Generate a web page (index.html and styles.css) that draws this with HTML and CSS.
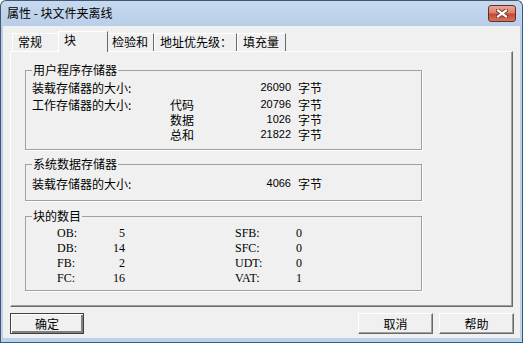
FILE: index.html
```html
<!DOCTYPE html>
<html lang="zh-CN">
<head>
  <meta charset="UTF-8">
  <title>属性 - 块文件夹离线</title>
  <link rel="stylesheet" href="styles.css">
</head>
<body>
  <div class="window">
    <div class="titlebar">
      <span class="title">属性 - 块文件夹离线</span>
      <button class="close" title="关闭">
        <svg width="12" height="9" viewBox="0 0 12 9">
          <path d="M2 1.5 L10 7.5 M10 1.5 L2 7.5" stroke="#6a2a20" stroke-width="4" stroke-linecap="square"/>
          <path d="M2 1.5 L10 7.5 M10 1.5 L2 7.5" stroke="#fff" stroke-width="2.2" stroke-linecap="square"/>
        </svg>
      </button>
    </div>

    <div class="client">
      <div class="tabs">
        <div class="tab tab-general">常规</div>
        <div class="tab tab-block active">块</div>
        <div class="tab tab-checksum">检验和</div>
        <div class="tab tab-priority">地址优先级：</div>
        <div class="tab tab-fill">填充量</div>
      </div>

      <div class="page">
        <fieldset class="group group-user">
          <legend>用户程序存储器</legend>
          <div class="mem-grid">
            <span>装载存储器的大小:</span><span></span><span class="num">26090</span><span class="unit">字节</span>
            <span>工作存储器的大小:</span><span>代码</span><span class="num">20796</span><span class="unit">字节</span>
            <span></span><span>数据</span><span class="num">1026</span><span class="unit">字节</span>
            <span></span><span>总和</span><span class="num">21822</span><span class="unit">字节</span>
          </div>
        </fieldset>

        <fieldset class="group group-sys">
          <legend>系统数据存储器</legend>
          <div class="mem-grid single">
            <span>装载存储器的大小:</span><span></span><span class="num">4066</span><span class="unit">字节</span>
          </div>
        </fieldset>

        <fieldset class="group group-blocks">
          <legend>块的数目</legend>
          <div class="blk-grid">
            <span>OB:</span><span class="val">5</span><span class="lbl2">SFB:</span><span class="val">0</span>
            <span>DB:</span><span class="val">14</span><span class="lbl2">SFC:</span><span class="val">0</span>
            <span>FB:</span><span class="val">2</span><span class="lbl2">UDT:</span><span class="val">0</span>
            <span>FC:</span><span class="val">16</span><span class="lbl2">VAT:</span><span class="val">1</span>
          </div>
        </fieldset>
      </div>

      <div class="buttons">
        <button class="btn btn-ok">确定</button>
        <button class="btn btn-cancel">取消</button>
        <button class="btn btn-help">帮助</button>
      </div>
    </div>
  </div>
</body>
</html>
```

FILE: styles.css
```css
/* dialog window */
body {
  margin: 0;
  background: #fff;
}
.window {
  width: 523px;
  height: 343px;
  box-sizing: border-box;
  border: 1px solid #3f5876;
  border-bottom-color: #2f5f8f;
  border-radius: 6px 6px 0 0;
  background: linear-gradient(to bottom, #c6d9ee 0, #b9cfe8 25px, #bcd2ea 100%);
  display: flex;
  flex-direction: column;
  font-family: "Noto Sans CJK SC", sans-serif;
  font-size: 12px;
  color: #000;
}
.titlebar {
  height: 25px;
  box-sizing: border-box;
  display: flex;
  justify-content: space-between;
  align-items: flex-start;
  padding: 0 6px;
}
.title {
  line-height: 24px;
}
.close {
  margin-top: 4px;
  width: 28px;
  height: 17px;
  padding: 0;
  border: 1px solid #6d2b22;
  border-radius: 3px;
  background: linear-gradient(to bottom, #e9a898 0, #d9806c 45%, #c54a33 55%, #d27460 100%);
  display: flex;
  align-items: center;
  justify-content: center;
}

/* client area */
.client {
  flex: 1;
  margin: 0 2px 4px;
  background: #f0f0f0;
  display: flex;
  flex-direction: column;
}
.tabs {
  height: 25px;
  display: flex;
  align-items: flex-end;
  padding-left: 9px;
}
.tab {
  height: 18px;
  box-sizing: border-box;
  border: 1px solid;
  border-color: #fff #696969 transparent #fff;
  border-bottom: none;
  padding-left: 5px;
  line-height: 16px;
  background: #f0f0f0;
  white-space: nowrap;
}
.tab.active {
  height: 21px;
  margin: 0 -2px -1px;
  position: relative;
  z-index: 1;
  line-height: 15px;
}
.tab-general { width: 48px; }
.tab-block { width: 50px; }
.tab-checksum { width: 48px; }
.tab-priority { width: 83px; }
.tab-fill { width: 49px; }

.page {
  height: 256px;
  box-sizing: border-box;
  margin: 0 7px;
  border: 1px solid;
  border-color: #fff #696969 #696969 #fff;
  box-shadow: inset -1px -1px #a0a0a0;
  padding: 11px 0 0 14px;
}

/* group boxes */
.group {
  width: 397px;
  min-width: 0;
  box-sizing: border-box;
  margin: 0;
  border: 1px solid #a0a0a0;
  box-shadow: 1px 1px 0 #fff;
}
.group legend {
  padding: 0 1px;
  line-height: 14px;
}
.group-user {
  padding: 3px 6px 7px;
  margin-bottom: 7px;
}
.group-sys {
  padding: 5px 6px 9px;
  margin-bottom: 8px;
}
.group-blocks {
  padding: 3px 6px 4px;
}
.mem-grid {
  display: grid;
  grid-template-columns: 138px 68px 53px auto;
  grid-template-rows: 17px repeat(3, 15px);
  line-height: 15px;
}
.mem-grid.single {
  grid-template-rows: 15px;
}
.num {
  text-align: right;
  font-family: "Liberation Sans", sans-serif;
  font-size: 11px;
}
.unit {
  padding-left: 7px;
}
.blk-grid {
  display: grid;
  grid-template-columns: 40px 28px 150px 27px;
  grid-auto-rows: 15px;
  padding-left: 25px;
  line-height: 15px;
  font-family: "Liberation Serif", serif;
  font-size: 12px;
}
.val {
  text-align: right;
}
.lbl2 {
  padding-left: 110px;
}

/* buttons */
.buttons {
  display: flex;
  height: 21px;
  margin-top: 6px;
  padding: 0 6px 0 7px;
}
.btn {
  width: 75px;
  height: 21px;
  padding: 0;
  font-family: "Noto Sans CJK SC", sans-serif;
  font-size: 12px;
  color: #000;
  background: #f0f0f0;
  border: 1px solid;
  border-color: #fff #696969 #696969 #fff;
  box-shadow: inset -1px -1px #a0a0a0;
}
.btn-ok {
  width: 74px;
  border-color: #404040;
  box-shadow: inset 1px 1px #fff, inset -2px -2px #808080;
}
.btn-cancel {
  margin-left: auto;
}
.btn-help {
  margin-left: 6px;
}
```
